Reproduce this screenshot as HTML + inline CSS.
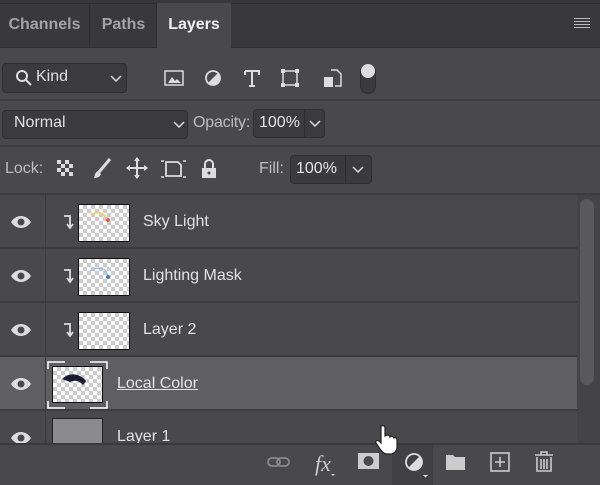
<!DOCTYPE html>
<html><head><style>
*{margin:0;padding:0;box-sizing:border-box}
body{width:600px;height:485px;background:#49484b;font-family:"Liberation Sans",sans-serif;color:#d6d6d6;position:relative;overflow:hidden}
.a{position:absolute}
.tabs{left:0;top:0;width:600px;height:48px;background:#39383b;border-bottom:1px solid #2f2e31}
.tab{top:3px;height:45px;font-size:16px;font-weight:bold;line-height:44px;color:#a3a3a5;text-align:center}
.box{background:#3b3a3d;border:1px solid #2f2e31;border-radius:4px}
.hl{height:2px;background:#3c3b3e;left:0;width:600px}
.row{left:0;width:577px;height:54px;border-bottom:2px solid #3c3b3e}
.thumb{width:52px;height:38px;border:1px solid #111;background-color:#fff;background-image:linear-gradient(45deg,#ccc 25%,transparent 25%,transparent 75%,#ccc 75%),linear-gradient(45deg,#ccc 25%,transparent 25%,transparent 75%,#ccc 75%);background-size:8px 8px;background-position:0 0,4px 4px}
.name{font-size:16px;color:#e2e2e2}
</style></head><body>
<div class="a tabs"></div>
<div class="a" style="left:0;top:3px;width:600px;height:1px;background:#2f2e31"></div>
<div class="a tab" style="left:0;width:90px;border-right:1px solid #2f2e31">Channels</div>
<div class="a tab" style="left:91px;width:66px;border-right:1px solid #2f2e31">Paths</div>
<div class="a tab" style="left:157px;width:74px;background:#49484b;color:#f0f0f0;height:46px">Layers</div>
<div class="a" style="left:574px;top:18px;width:16px;height:11px;background:repeating-linear-gradient(#bbb 0 1px,transparent 1px 3px)"></div>

<div class="a box" style="left:2px;top:63px;width:125px;height:30px"></div>
<svg class="a" style="left:14px;top:68px" width="20" height="20"><circle cx="8" cy="8" r="5" fill="none" stroke="#ddd" stroke-width="2"/><line x1="12" y1="12" x2="17" y2="17" stroke="#ddd" stroke-width="2"/></svg>
<div class="a" style="left:36px;top:68px;font-size:16px;color:#e0e0e0">Kind</div>
<svg class="a" style="left:110px;top:74px" width="12" height="10"><path d="M1 2l5 5 5-5" fill="none" stroke="#ddd" stroke-width="1.5"/></svg>
<svg class="a" style="left:163px;top:67px" width="200" height="30">
<rect x="2" y="4" width="18" height="14" fill="none" stroke="#ddd" stroke-width="1.5"/><path d="M5 16l4-6 3 4 2-2 4 4z" fill="#ddd"/>
<circle cx="50" cy="11" r="7" fill="none" stroke="#ddd" stroke-width="1.8"/><path d="M45 16A7 7 0 0 0 55 6z" fill="#ddd"/>
<path d="M82 4h14v4M89 4v15M86 19h6M82 4v4" fill="none" stroke="#ddd" stroke-width="2"/>
<rect x="120" y="4" width="14" height="14" fill="none" stroke="#ddd" stroke-width="1.5"/><g fill="#ddd"><rect x="118" y="2" width="4" height="4"/><rect x="132" y="2" width="4" height="4"/><rect x="118" y="16" width="4" height="4"/><rect x="132" y="16" width="4" height="4"/></g>
<path d="M168 3h6l4 4v12h-6" fill="none" stroke="#ddd" stroke-width="1.5"/><rect x="161" y="10" width="9" height="10" fill="#ddd"/>
</svg>
<div class="a" style="left:360px;top:64px;width:16px;height:30px;border-radius:8px;background:#3b3a3d;border:1px solid #2f2e31"></div>
<div class="a" style="left:361px;top:64px;width:14px;height:14px;border-radius:7px;background:#ddd"></div>
<div class="a hl" style="top:99px"></div>

<div class="a box" style="left:2px;top:110px;width:186px;height:29px"></div>
<div class="a" style="left:14px;top:114px;font-size:16px;color:#e0e0e0">Normal</div>
<svg class="a" style="left:173px;top:120px" width="12" height="10"><path d="M1 2l5 5 5-5" fill="none" stroke="#ddd" stroke-width="1.5"/></svg>
<div class="a" style="left:193px;top:114px;font-size:16px;color:#bdbdbd;letter-spacing:-0.2px">Opacity:</div>
<div class="a box" style="left:253px;top:109px;width:72px;height:29px"></div>
<div class="a" style="left:304px;top:110px;width:1px;height:27px;background:#2f2e31"></div>
<div class="a" style="left:259px;top:114px;font-size:16px;color:#e6e6e6">100%</div>
<svg class="a" style="left:309px;top:119px" width="12" height="10"><path d="M1 2l5 5 5-5" fill="none" stroke="#ddd" stroke-width="1.5"/></svg>
<div class="a hl" style="top:145px"></div>

<div class="a" style="left:5px;top:160px;font-size:16px;color:#bdbdbd">Lock:</div>
<svg class="a" style="left:55px;top:156px" width="170" height="26">
<rect x="2" y="4" width="16" height="16" fill="#ddd"/><g fill="#49484b"><rect x="6" y="4" width="4" height="4"/><rect x="14" y="4" width="4" height="4"/><rect x="2" y="8" width="4" height="4"/><rect x="10" y="8" width="4" height="4"/><rect x="6" y="12" width="4" height="4"/><rect x="14" y="12" width="4" height="4"/><rect x="2" y="16" width="4" height="4"/><rect x="10" y="16" width="4" height="4"/></g>
<path d="M55 3L44 16" stroke="#ddd" stroke-width="3"/><path d="M43 15c-3 1-3 4-4 7 3 0 6-1 7-4z" fill="#ddd"/>
<path d="M82 2v20M72 12h20" stroke="#ddd" stroke-width="2"/><path d="M82 1l-3 4h6zM82 23l-3-4h6zM71 12l4-3v6zM93 12l-4-3v6z" fill="#ddd"/>
<path d="M111 6h12l3 3v11h-15z" fill="none" stroke="#ddd" stroke-width="1.8"/><path d="M106 5h3M128 5h3M106 21h3M128 21h3" stroke="#ddd" stroke-width="1.5"/>
<path d="M150 12v-4a4 4 0 0 1 8 0v4" fill="none" stroke="#ddd" stroke-width="2"/><rect x="147" y="12" width="14" height="10" fill="#ddd"/><circle cx="154" cy="17" r="1.5" fill="#49484b"/>
</svg>
<div class="a" style="left:259px;top:160px;font-size:16px;color:#bdbdbd">Fill:</div>
<div class="a box" style="left:290px;top:155px;width:82px;height:29px"></div>
<div class="a" style="left:345px;top:156px;width:1px;height:27px;background:#2f2e31"></div>
<div class="a" style="left:296px;top:160px;font-size:16px;color:#e6e6e6">100%</div>
<svg class="a" style="left:352px;top:165px" width="12" height="10"><path d="M1 2l5 5 5-5" fill="none" stroke="#ddd" stroke-width="1.5"/></svg>
<div class="a hl" style="top:193px"></div>

<div class="a row" style="top:195px"></div>
<div class="a row" style="top:249px"></div>
<div class="a row" style="top:303px"></div>
<div class="a row" style="top:357px;background:#5f5e61"></div>
<div class="a" style="left:45px;top:195px;width:1px;height:248px;background:#3c3b3e"></div>
<div class="a" style="left:577px;top:195px;width:23px;height:248px;background:#444346"></div>
<div class="a" style="left:580px;top:199px;width:14px;height:186px;border-radius:7px;background:#59585b"></div>

<svg class="a" style="left:0;top:195px" width="45" height="250">
<g fill="#ddd"><path d="M11 27c5-8 15-8 20 0-5 8-15 8-20 0z"/><path d="M11 81c5-8 15-8 20 0-5 8-15 8-20 0z"/><path d="M11 135c5-8 15-8 20 0-5 8-15 8-20 0z"/><path d="M11 189c5-8 15-8 20 0-5 8-15 8-20 0z"/><path d="M11 243c5-8 15-8 20 0-5 8-15 8-20 0z"/></g>
<g fill="#49484b"><circle cx="21" cy="27" r="3.5"/><circle cx="21" cy="81" r="3.5"/><circle cx="21" cy="135" r="3.5"/><circle cx="21" cy="189" r="3.5"/><circle cx="21" cy="243" r="3.5"/></g>
</svg>
<svg class="a" style="left:60px;top:195px" width="14" height="160" fill="none" stroke="#ddd" stroke-width="1.8">
<path d="M4 21h6v11M7 29l3 4 3-4"/><path d="M4 75h6v11M7 83l3 4 3-4"/><path d="M4 129h6v11M7 137l3 4 3-4"/>
</svg>
<div class="a thumb" style="left:78px;top:204px"></div>
<svg class="a" style="left:78px;top:204px" width="52" height="38"><path d="M13 11c6-4 12-3 16 4" fill="none" stroke="#f0d070" stroke-width="2"/><circle cx="30" cy="16" r="2" fill="#e55"/></svg>
<div class="a thumb" style="left:78px;top:258px"></div>
<svg class="a" style="left:78px;top:258px" width="52" height="38"><path d="M12 13c5-3 10-4 15-1l3 6" fill="none" stroke="#9bc0e8" stroke-width="1.5"/><circle cx="30" cy="19" r="2" fill="#4a7ab5"/></svg>
<div class="a thumb" style="left:78px;top:312px"></div>
<div class="a name" style="left:143px;top:213px">Sky Light</div>
<div class="a name" style="left:143px;top:267px">Lighting Mask</div>
<div class="a name" style="left:143px;top:321px">Layer 2</div>

<div class="a thumb" style="left:52px;top:366px;width:51px;height:37px"></div>
<svg class="a" style="left:47px;top:361px" width="62" height="48" fill="none" stroke="#fff" stroke-width="1.5">
<path d="M1 8V1h17M43 1h17v7M1 40v7h17M43 47h17v-7"/>
<path d="M15 18c7-7 18-6 24 2l-3 4c-4-5-9-5-13-3z" fill="#1a1a30" stroke="none"/>
</svg>
<div class="a name" style="left:117px;top:375px;text-decoration:underline">Local Color</div>

<div class="a" style="left:52px;top:418px;width:51px;height:30px;border:1px solid #222;background:#8b8a8d"></div>
<div class="a name" style="left:117px;top:428px">Layer 1</div>

<div class="a" style="left:0;top:443px;width:600px;height:42px;background:#49484b;border-top:2px solid #3a393c"></div>
<div class="a" style="left:392px;top:445px;width:41px;height:40px;background:#414043"></div>
<svg class="a" style="left:260px;top:448px" width="340" height="30">
<g fill="none" stroke="#8a898c" stroke-width="1.8"><rect x="8" y="10" width="12" height="8" rx="4"/><rect x="17" y="10" width="12" height="8" rx="4"/></g>
<text x="55" y="23" font-family="Liberation Serif,serif" font-style="italic" font-size="22" fill="#ccc">fx</text>
<path d="M71 26h4l-2 2z" fill="#ddd"/>
<rect x="98" y="5" width="21" height="16" fill="#ccc"/><circle cx="108.5" cy="13" r="5" fill="#49484b"/>
<circle cx="154" cy="14" r="8" fill="none" stroke="#ddd" stroke-width="1.8"/><path d="M148 20A8 8 0 0 0 160 8z" fill="#ddd"/>
<path d="M163 27h5l-2.5 2.5z" fill="#ddd"/>
<path d="M186 7h7l2 2h10v13h-19z" fill="#ccc"/>
<rect x="231" y="5" width="18" height="18" fill="none" stroke="#ccc" stroke-width="1.6"/><path d="M240 9v10M235 14h10" stroke="#ccc" stroke-width="1.6"/>
<path d="M275 7h18M281 7V4h6v3M277 9v14h14V9M281 11v10M284 11v10M287 11v10" fill="none" stroke="#ccc" stroke-width="1.6"/>
</svg>
<svg class="a" style="left:372px;top:424px" width="30" height="34"><path d="M9 2c2-1 4 0 4 2v8l2-1c2 0 3 1 3 2 1-1 3-1 4 1 1-1 3 0 3 2v7c0 4-3 7-7 7h-3c-3 0-5-2-7-5l-4-6c-1-2 1-3 3-2l2 2V4c0-1 0-2 0-2z" fill="#fff" stroke="#222" stroke-width="1.2"/></svg>
</body></html>
